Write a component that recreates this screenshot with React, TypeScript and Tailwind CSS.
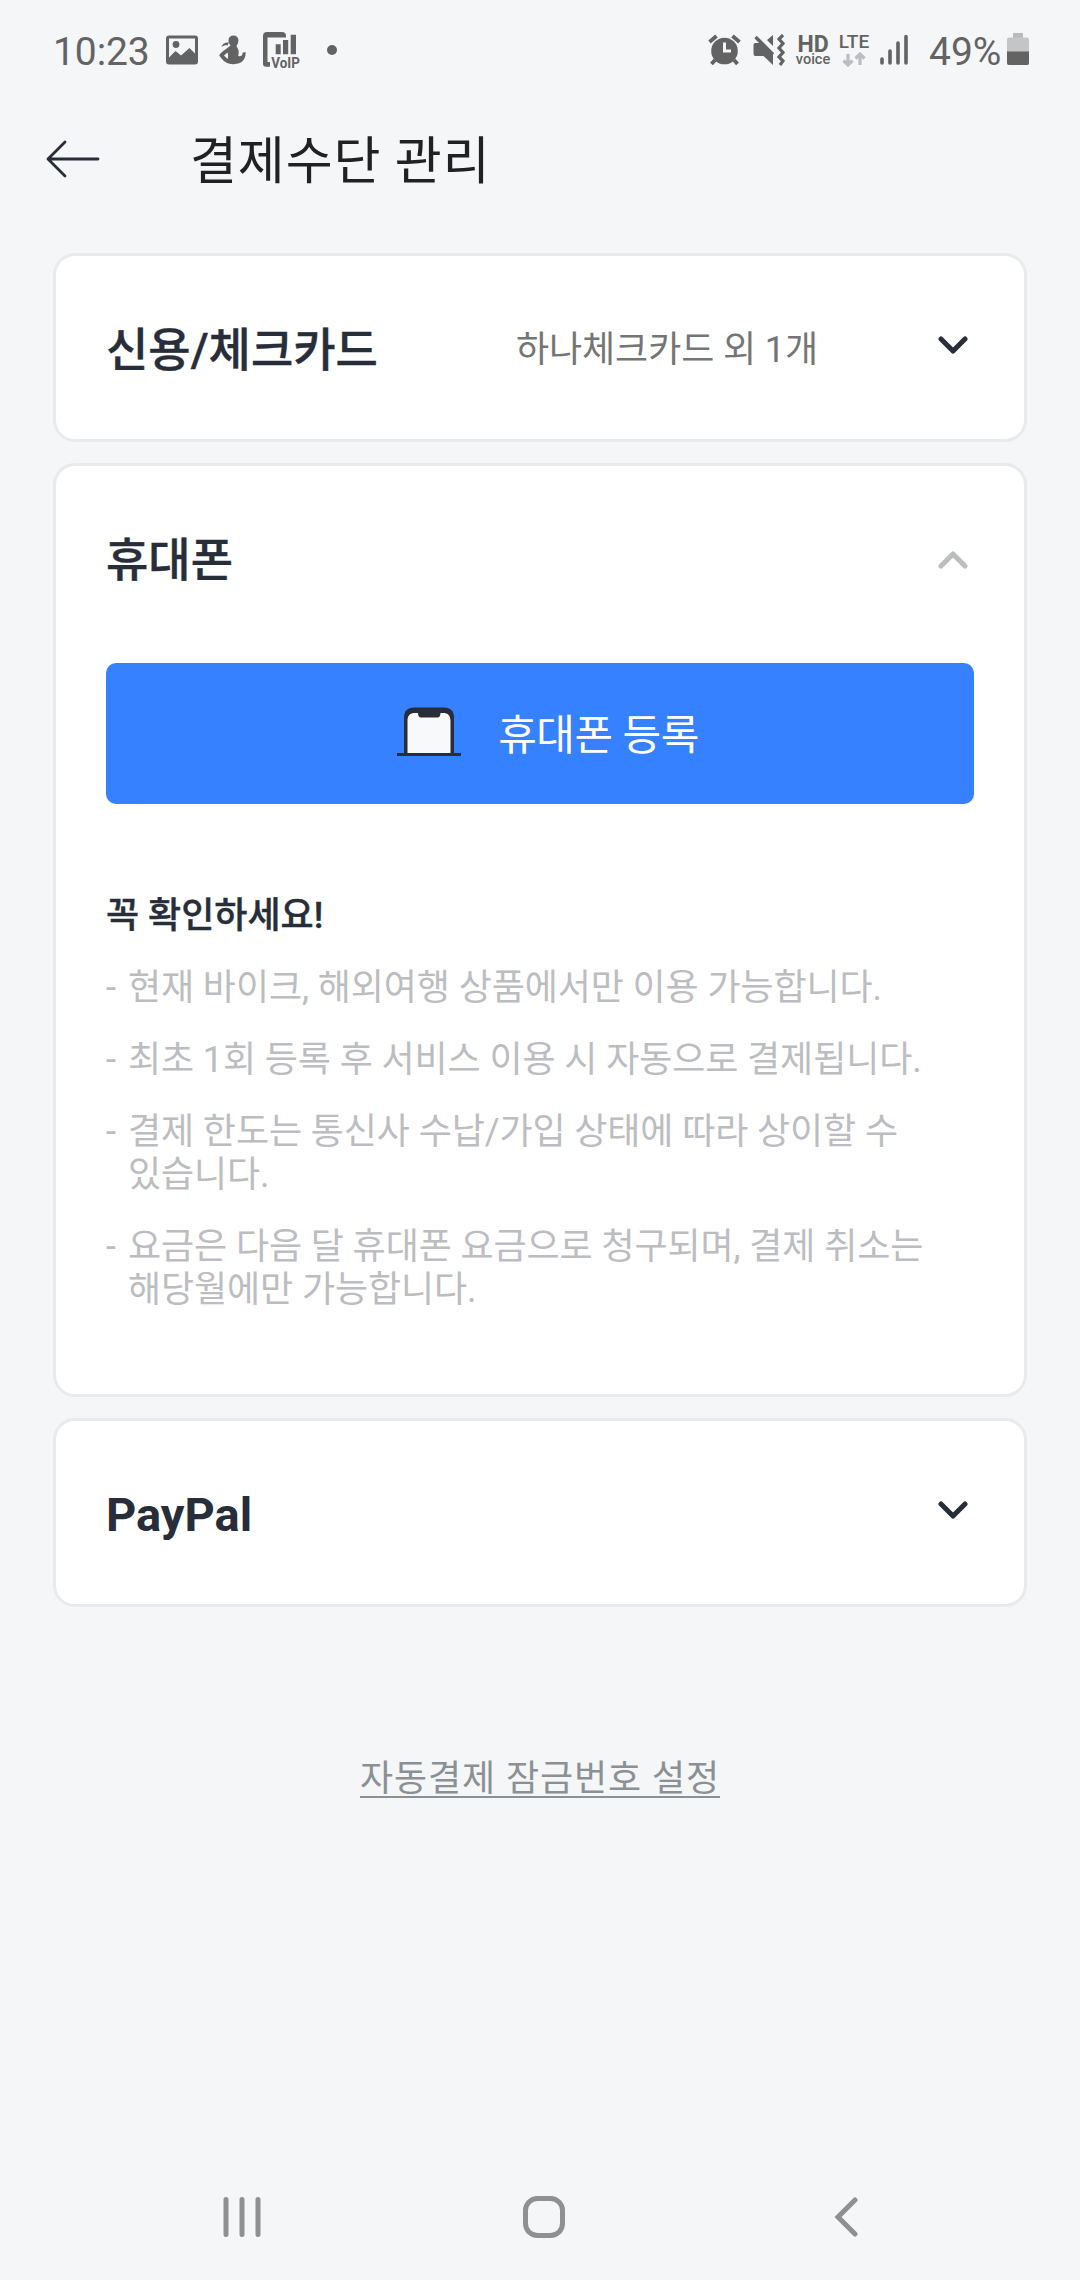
import type { ReactNode } from "react";

const NOTICES = [
  ["현재 바이크, 해외여행 상품에서만 이용 가능합니다."],
  ["최초 1회 등록 후 서비스 이용 시 자동으로 결제됩니다."],
  ["결제 한도는 통신사 수납/가입 상태에 따라 상이할 수", "있습니다."],
  ["요금은 다음 달 휴대폰 요금으로 청구되며, 결제 취소는", "해당월에만 가능합니다."],
];

function StatusBar() {
  return (
    <div className="flex h-[100px] items-center justify-between pl-[53px] pr-[51px] text-[#636363]">
      <div className="flex items-center">
        <span className="mt-[3px] w-[113px] text-[39px] leading-[46px] tracking-[-0.1px]">10:23</span>
        {/* Gallery */}
        <svg width="32" height="30" viewBox="0 0 32 30">
          <path
            fill="currentColor"
            fillRule="evenodd"
            d="M3 0.5h26a3 3 0 0 1 3 3v23a3 3 0 0 1-3 3H3a3 3 0 0 1-3-3v-23a3 3 0 0 1 3-3zM3 3.5v19l6.500-6.500 5.500 4.500 8.500-7.500 5.500 5.500v-15z"
          />
          <circle cx="10" cy="9.500" r="3.400" fill="currentColor" />
        </svg>
        {/* Exercise figure */}
        <svg className="ml-[21px]" width="27" height="30" viewBox="0 0 27 30" fill="currentColor">
          <path d="M14.500 0.500c3.600 0 5.200 2.500 4.900 5.500-.2 2.500-1 3.500-1.600 4.200-.3 1.300.2 2 1 3.300 1.300 2 1 4.500.4 7.500 2.800 1.200 4.600-.8 4.300-3.200l3-.8c.6 5-2 9.500-6 11-2 1-7 1.500-10 .8C6.500 28 3 25 0.300 20.500c.2-1.500 2-3 4-4.500 2.500-2 5-3.500 7.200-5.500-1-1.500-2.200-3-2-5.500.2-2.800 2-4.500 5-4.500zM8.500 17.500L5 20.500l3.500 3.500c.8-2 .9-4.500 0-6.500z" fillRule="evenodd" />
          <path d="M2.500 12c.7-3 3.500-5 7.500-4.500l-1.500 3C6.500 10 4.500 10.700 2.500 12z" />
        </svg>
        {/* VoIP */}
        <svg className="mt-[8px] ml-[17px]" width="40" height="44" viewBox="0 0 40 44" fill="currentColor">
          <path d="M6 34.700H3a3 3 0 0 1-3-3V4a4 4 0 0 1 4-4h15a4 4 0 0 1 4 4v1.500H4.500V30H7v4.700z" />
          <path d="M12.700 12.300h5v10h-5zM20 8h5.200v14.300H20zM27.700 2.700H33v19.600h-5.300z" />
          <text x="8.300" y="35.700" fontSize="15.500" fontWeight="700" textLength="28.500" lengthAdjust="spacingAndGlyphs">
            VoIP
          </text>
        </svg>
        <span className="ml-[24px] size-2.5 rounded-full bg-[#636363]" />
      </div>

      <div className="flex items-center">
        {/* Alarm */}
        <svg width="34" height="32" viewBox="0 0 34 32">
          <circle cx="16.500" cy="17" r="13.300" fill="currentColor" />
          <path d="M1.500 8l7-6M31.500 8l-7-6M7 26l-3.500 4M26 26l3.500 4" stroke="currentColor" strokeWidth="3.800" />
          <path d="M16.500 8.500v8.500H23" fill="none" stroke="#f4f6f8" strokeWidth="3" />
        </svg>
        {/* Muted, vibrating */}
        <svg className="ml-[11px]" width="34" height="32" viewBox="0 0 34 32">
          <path d="M2 9h6.500L20 20.500v10.500l-9.500-9H2a2 2 0 0 1-1.500-2v-9A2 2 0 0 1 2 9zM20 1v11l-6-6z" fill="currentColor" />
          <path d="M2.500 3L20 20.500" stroke="currentColor" strokeWidth="3.400" />
          <path d="M30 1l-4 4 4 4.500-4 4.500 4 4.500-4 4.500 4 4-3 4" fill="none" stroke="currentColor" strokeWidth="3.200" />
        </svg>
        <div className="mr-px ml-[9px] flex w-[34px] flex-col items-center">
          <span className="text-[23px] leading-[19px] font-bold">HD</span>
          <span className="text-[14.5px] leading-[12px] font-medium">voice</span>
        </div>
        <div className="ml-[7px] flex w-[32px] flex-col items-center">
          <span className="text-[19px] leading-[16px] font-medium">LTE</span>
          <svg className="mt-[2px]" width="24" height="15" viewBox="0 0 24 15" fill="none" stroke="#bcbdc0" strokeWidth="3.200">
            <path d="M6 2v11M1.500 8.500L6 13 10.500 8.500M18 13V2M13.500 6.500L18 2 22.500 6.500" />
          </svg>
        </div>
        <svg className="ml-2.5" width="28" height="32" viewBox="0 0 28 32" stroke="currentColor" strokeWidth="3.600" strokeLinecap="round">
          <path d="M2 25v4M10 17v12M18 9v20M26 2.500v26.500" />
        </svg>
        <span className="mt-[3px] ml-[21px] w-[78px] text-[39px] leading-[46px]">49%</span>
        <svg className="mb-[2px]" width="22" height="32" viewBox="0 0 22 32">
          <path d="M6 0h10v5H6z" fill="#b9babb" />
          <rect y="4.500" width="22" height="27.500" rx="2" fill="#c4c5c7" />
          <path d="M0 18.500h22V30a2 2 0 0 1-2 2H2a2 2 0 0 1-2-2z" fill="currentColor" />
        </svg>
      </div>
    </div>
  );
}

function Chevron({ open = false }: { open?: boolean }) {
  if (open) {
    return (
      <svg className="mt-[5px]" width="30" height="20" viewBox="0 0 30 20" fill="none" strokeWidth="5" strokeLinecap="round" strokeLinejoin="round">
        <path d="M3 16L15 4l12 12" stroke="#bcbdc0" />
      </svg>
    );
  }
  return (
    <svg className="mb-[5px]" width="30" height="20" viewBox="0 0 30 20" fill="none" strokeWidth="5" strokeLinecap="round" strokeLinejoin="round">
      <path d="M3 4L15 16L27 4" stroke="#272d39" />
    </svg>
  );
}

function Card({ title, summary, open, children }: { title: ReactNode; summary?: string; open?: boolean; children?: ReactNode }) {
  return (
    <section className="rounded-[22px] border-[3px] border-[#e8eaeb] bg-white px-[50px]">
      <div className="flex h-[183px] items-center">
        <h2 className="flex-1 pt-[4px] text-[46px] leading-[54px] font-medium text-[#272d39] [-webkit-text-stroke:0.4px]">{title}</h2>
        {summary && <span className="mr-[120px] pt-[6px] text-[36px] leading-[43px] tracking-[-0.1px] text-[#757575]">{summary}</span>}
        <button className="mr-[6px]">
          <Chevron open={open} />
        </button>
      </div>
      {children}
    </section>
  );
}

function PhoneIcon() {
  return (
    <svg className="mb-[5px]" width="64" height="49" viewBox="0 0 64 49">
      <path d="M7 47V11C7 4 10.500 0.500 17 0.500h30c6.500 0 10 3.500 10 10.500v36z" fill="#272d39" />
      <path d="M10.500 46V14c0-5.500 2.500-8 7.500-8h3c0 2.500 1 4.500 3 4.500h16.500c2 0 3-2 3-4.500h2.500c5 0 7.500 2.500 7.500 8v32z" fill="#f8f9fb" />
      <path d="M0 46h64v3H0z" fill="#272d39" />
    </svg>
  );
}

export default function App() {
  return (
    <div className="flex h-[2280px] w-[1080px] flex-col bg-[#f4f6f8] font-[Roboto,'Noto_Sans_CJK_KR',sans-serif]">
      <StatusBar />

      <header className="flex h-[120px] items-center pl-[46px]">
        <svg className="mb-[3px]" width="54" height="38" viewBox="0 0 54 38" fill="none" stroke="#272d39" strokeWidth="2.800" strokeLinecap="round" strokeLinejoin="round">
          <path d="M52 19H2M19 2L2 19l17 17" />
        </svg>
        <h1 className="ml-[90px] pt-[4px] text-[51px] leading-[60px] tracking-[0.9px] text-[#212121]">결제수단 관리</h1>
      </header>

      <main className="flex flex-1 flex-col gap-[21px] px-[53px] pt-[33px]">
        <Card title="신용/체크카드" summary="하나체크카드 외 1개" />

        <Card title="휴대폰" open>
          <button className="mt-[14px] flex h-[141px] w-full items-center justify-center gap-[37px] rounded-[10px] bg-[#3681ff] pl-[16px]">
            <PhoneIcon />
            <span className="pt-[5px] text-[42px] leading-[50px] tracking-[-0.5px] text-white">휴대폰 등록</span>
          </button>
          <h3 className="mt-[91px] text-[36px] leading-[43px] font-medium text-[#272d39] [-webkit-text-stroke:0.4px]">꼭 확인하세요!</h3>
          <ul className="mt-[29px] flex flex-col gap-[29px] pb-[82px] text-[36px] leading-[43px] tracking-[-0.1px] text-[#bcbdc0]">
            {NOTICES.map((lines) => (
              <li key={lines[0]} className="flex">
                <span className="w-[22px]">-</span>
                <div className="whitespace-nowrap">
                  {lines.map((line) => (
                    <p key={line}>{line}</p>
                  ))}
                </div>
              </li>
            ))}
          </ul>
        </Card>

        <Card title={<span className="text-[47px] font-bold [-webkit-text-stroke:0px]">PayPal</span>} />

        <a className="mt-[135px] self-center border-b-2 border-[#8b9095] text-[36px] leading-[33px] tracking-[0.9px] text-[#8b9095]">자동결제 잠금번호 설정</a>
      </main>

      {/* Navigation bar */}
      <nav className="flex h-[126px] items-center pl-[223px] text-[#8f9190]">
        <svg width="39" height="40" viewBox="0 0 39 40" stroke="currentColor" strokeWidth="5" strokeLinecap="round">
          <path d="M3 2.500v35M19 2.500v35M35 2.500v35" />
        </svg>
        <svg className="ml-[261px]" width="42" height="42" viewBox="0 0 42 42" fill="none" stroke="currentColor" strokeWidth="5">
          <rect x="2.500" y="2.500" width="37" height="37" rx="12" />
        </svg>
        <svg className="ml-[269px]" width="25" height="40" viewBox="0 0 25 40" fill="none" stroke="currentColor" strokeWidth="5" strokeLinecap="round">
          <path d="M21 3L4 20l17 17" />
        </svg>
      </nav>
    </div>
  );
}
